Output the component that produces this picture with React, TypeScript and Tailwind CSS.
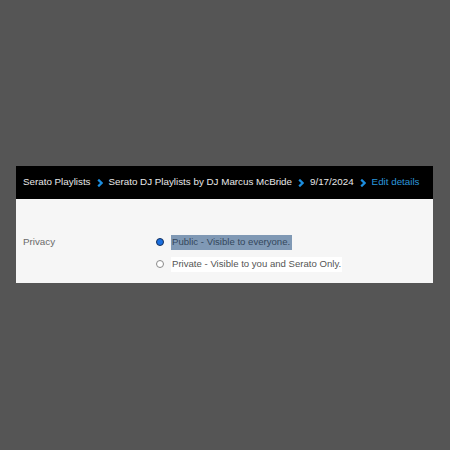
import React from "react";

const Chevron = () => (
  <svg width="6" height="8" viewBox="0 0 6 8" className="mx-[6px] shrink-0 mt-[1px]">
    <polyline points="1.2,0.6 4.6,4 1.2,7.4" fill="none" stroke="#1c8ee0" strokeWidth="2.2" />
  </svg>
);

export default function App() {
  return (
    <div
      className="w-[450px] h-[450px] bg-[#555555] pt-[166px] pl-[16px]"
      style={{ fontFamily: '"Liberation Sans", Arial, sans-serif' }}
    >
      <div className="w-[417px]">
        <div className="h-[33px] bg-black flex items-center pl-[7px] text-[9.8px] text-[#e8e8e8]">
          <span>Serato Playlists</span>
          <Chevron />
          <span>Serato DJ Playlists by DJ Marcus McBride</span>
          <Chevron />
          <span>9/17/2024</span>
          <Chevron />
          <span className="text-[#2c97dc]">Edit details</span>
        </div>
        <div className="h-[84px] bg-[#f6f6f6] pt-[32px] pl-[7px] flex text-[9.6px]">
          <div className="w-[133px] h-[22px] flex items-center text-[#6a6a6a] text-[9.8px]">Privacy</div>
          <div className="flex flex-col">
            <div className="h-[22px] flex items-center">
              <div className="w-[8px] h-[8px] rounded-full bg-[#1a6fe0] border border-[#142f5a] shrink-0" />
              <span className="ml-[7px] bg-[#8099b5] text-[#34475c] h-[15px] flex items-center pl-[1px] pr-[2px]">
                Public - Visible to everyone.
              </span>
            </div>
            <div className="h-[22px] flex items-center">
              <div className="w-[8px] h-[8px] rounded-full bg-white border border-[#8a8a8a] shrink-0" />
              <span className="ml-[7px] bg-white text-[#555555] h-[15px] flex items-center pl-[1px] pr-[1px]">
                Private - Visible to you and Serato Only.
              </span>
            </div>
          </div>
        </div>
      </div>
    </div>
  );
}
